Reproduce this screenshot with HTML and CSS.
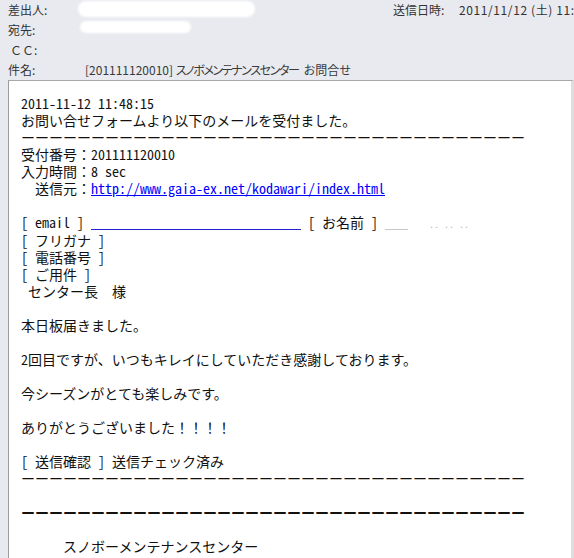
FILE: index.html
```html
<!DOCTYPE html>
<html lang="ja">
  <head>
    <meta charset="UTF-8" />
    <meta name="viewport" content="width=device-width, initial-scale=1.0" />
    <title>お問合せ</title>
    <link rel="stylesheet" href="styles.css">
  </head>
  <body>
    <div class="mail">
      <div class="head">
        <div class="row">
          <span class="label">差出人:</span>
          <span class="value from"><span class="mask mask-from"></span></span>
          <span class="label date-label">送信日時:</span>
          <span class="value date">2011/11/12 (土) 11:48</span>
        </div>
        <div class="row">
          <span class="label">宛先:</span>
          <span class="value"><span class="mask mask-to"></span></span>
        </div>
        <div class="row">
          <span class="label cc">ＣＣ:</span>
        </div>
        <div class="row">
          <span class="label">件名:</span>
          <span class="value subject">[201111120010] <span class="kana">スノボメンテナンスセンター</span>&nbsp;&nbsp;お問合せ</span>
        </div>
      </div>

      <div class="frame">
<pre class="message">2011-11-12 11:48:15
お問い合せフォームより以下のメールを受付ました。
ーーーーーーーーーーーーーーーーーーーーーーーーーーーーーーーーーーーー
受付番号<span class="fw">：</span>201111120010
入力時間<span class="fw">：</span>8 sec
<span class="fw">　</span>送信元<span class="fw">：</span><a href="http://www.gaia-ex.net/kodawari/index.html">http://www.gaia-ex.net/kodawari/index.html</a>

[ email ] <a class="hidden-link" href="#">                              </a> [ お名前 ] <span class="ghost-line"></span>   <span class="ghost-dots">.. .. ..</span>
[ フリガナ ]
[ 電話番号 ]
[ ご用件 ]
 センター長<span class="fw">　</span>様

本日板届きました。

2回目ですが、いつもキレイにしていただき感謝しております。

今シーズンがとても楽しみです。

ありがとうございました<span class="fw">！！！！</span>

[ 送信確認 ] 送信チェック済み
ーーーーーーーーーーーーーーーーーーーーーーーーーーーーーーーーーーーー

<b class="heavy">ーーーーーーーーーーーーーーーーーーーーーーーーーーーーーーーーーーーー</b>

<span class="fw">　　　</span>スノボーメンテナンスセンター
</pre>
      </div>
    </div>
  </body>
</html>
```

FILE: styles.css
```css
body {
  margin: 0;
  width: 574px;
  height: 558px;
  overflow: hidden;
  background-color: #e8eaef;
  font-family: "Noto Sans CJK JP", sans-serif;
}
.head {
  padding-left: 8px;
  color: #333;
  font-size: 12px;
}
.row {
  display: flex;
  height: 20px;
  line-height: 20px;
  white-space: nowrap;
}
.label {
  width: 77px;
  flex: none;
}
.label.cc {
  padding-left: 2px;
}
.from {
  width: 308px;
  flex: none;
}
.date-label {
  width: 66px;
}
.date {
  letter-spacing: 0.6px;
}
.subject {
  font-feature-settings: "palt" 1;
  color: #3a3a3a;
}
.subject .kana {
  letter-spacing: -1.4px;
}
.mask {
  display: inline-block;
  background-color: #fff;
  border-radius: 8px;
  filter: blur(1px);
  vertical-align: top;
}
.mask-from {
  width: 177px;
  height: 16px;
  margin: 1px 0 0 -7px;
}
.mask-to {
  width: 111px;
  height: 12px;
  margin: 1px 0 0 -5px;
}
.frame {
  margin-left: 8px;
  height: 478px;
  background-color: #fff;
  border-top: 1px solid #a8a8a8;
  border-left: 1px solid #9c9c9c;
  border-right: 3px solid #dedede;
}
.message {
  margin: 0;
  padding: 14px 0 0 12px;
  font-family: "Noto Sans CJK JP", monospace;
  font-feature-settings: "hwid" 1;
  font-size: 14px;
  line-height: 17px;
  color: #111;
}
.message .fw {
  font-feature-settings: normal;
}
.message a {
  color: #0000ff;
}
.hidden-link {
  text-decoration: underline #2020d0;
}
.ghost-line {
  display: inline-block;
  width: 23px;
  height: 1px;
  background-color: #c8c8c8;
  vertical-align: -2px;
}
.ghost-dots {
  color: #b0b0b0;
  font-size: 10px;
}
.heavy {
  font-weight: bold;
}
```
